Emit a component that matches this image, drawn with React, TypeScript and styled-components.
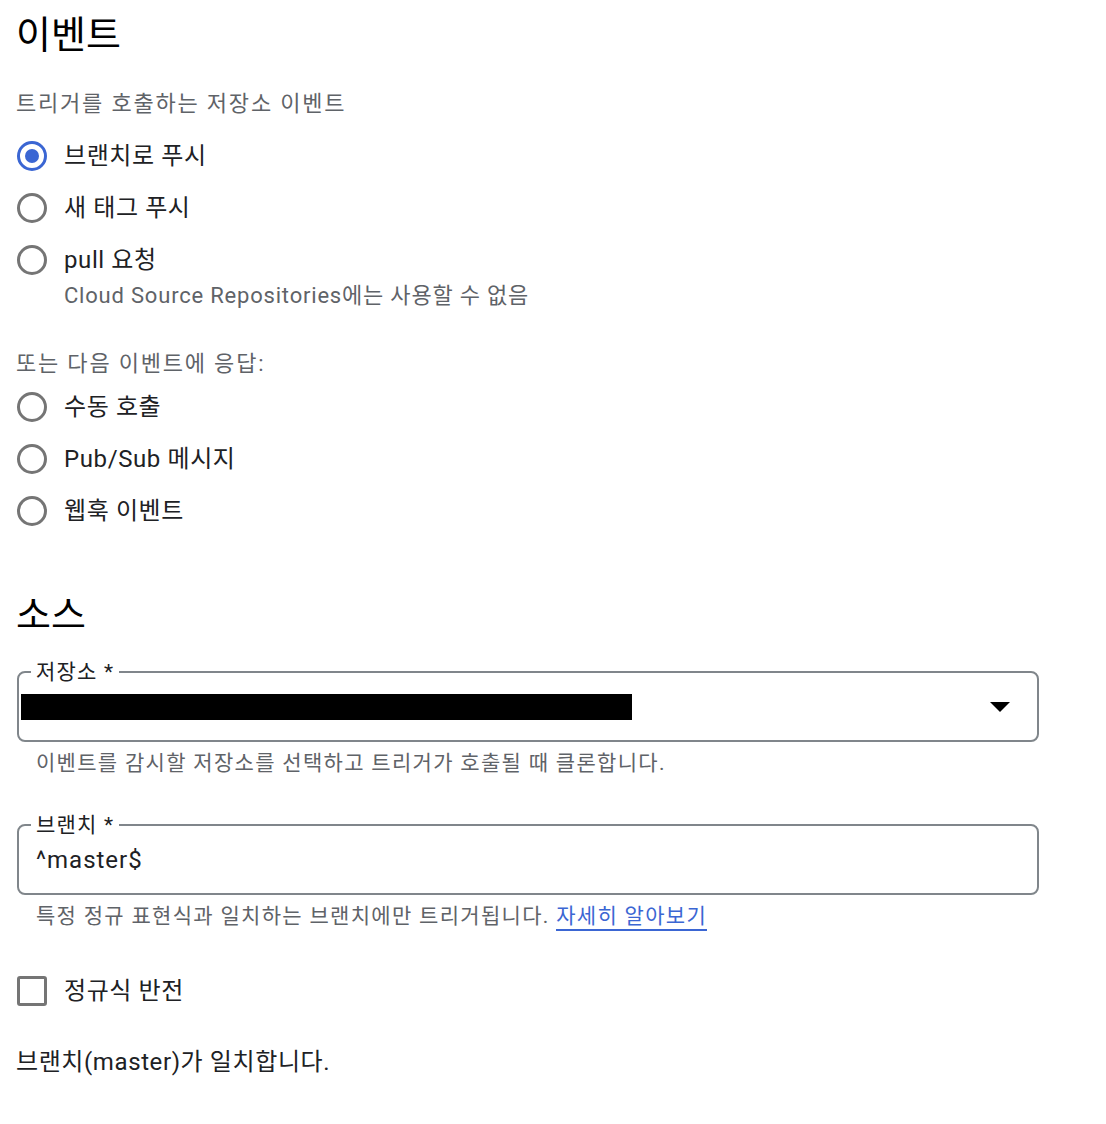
import styled, { createGlobalStyle } from 'styled-components';

const GlobalStyle = createGlobalStyle`
	body {
		margin: 0;
		background: #ffffff;
		font-family: Roboto, 'Noto Sans CJK KR', sans-serif;
		color: #202124;
	}
`;

const BLUE = '#3b66d3';
const GRAY_TEXT = '#5f6368';
const BORDER = '#80868b';

type RadioOption = { label: string; checked?: boolean; hint?: string };

const pushOptions: RadioOption[] = [
	{ label: '브랜치로 푸시', checked: true },
	{ label: '새 태그 푸시' },
	{ label: 'pull 요청', hint: 'Cloud Source Repositories에는 사용할 수 없음' },
];

const otherOptions: RadioOption[] = [{ label: '수동 호출' }, { label: 'Pub/Sub 메시지' }, { label: '웹훅 이벤트' }];

function RadioList({ options, gap }: { options: RadioOption[]; gap: number }) {
	return (
		<RadioGroup $gap={gap}>
			{options.map((opt) => (
				<div key={opt.label}>
					<RadioRow>
						<RadioCircle $checked={!!opt.checked} />
						<OptionLabel>{opt.label}</OptionLabel>
					</RadioRow>
					{opt.hint && <OptionHint>{opt.hint}</OptionHint>}
				</div>
			))}
		</RadioGroup>
	);
}

export default function App() {
	return (
		<>
			<GlobalStyle />
			<Page>
				<SectionTitle>이벤트</SectionTitle>
				<GroupCaption $gap={32}>트리거를 호출하는 저장소 이벤트</GroupCaption>
				<RadioList options={pushOptions} gap={11} />
				<GroupCaption $gap={38}>또는 다음 이벤트에 응답:</GroupCaption>
				<RadioList options={otherOptions} gap={2} />

				<SectionTitle $gap={56}>소스</SectionTitle>

				<Field $gap={23}>
					<FieldLabel>저장소 *</FieldLabel>
					<FieldBody>
						<Redacted />
						<DropArrow viewBox="0 0 20 10">
							<path d="M0 0 L20 0 L10 10 Z" fill="#000" />
						</DropArrow>
					</FieldBody>
				</Field>
				<FieldHint>이벤트를 감시할 저장소를 선택하고 트리거가 호출될 때 클론합니다.</FieldHint>

				<Field $gap={36}>
					<FieldLabel>브랜치 *</FieldLabel>
					<FieldBody>
						<FieldValue>^master$</FieldValue>
					</FieldBody>
				</Field>
				<FieldHint>
					특정 정규 표현식과 일치하는 브랜치에만 트리거됩니다. <HelpLink href="#">자세히 알아보기</HelpLink>
				</FieldHint>

				<CheckRow>
					<CheckBox />
					<OptionLabel>정규식 반전</OptionLabel>
				</CheckRow>

				<MatchText>브랜치(master)가 일치합니다.</MatchText>
			</Page>
		</>
	);
}

const Page = styled.div`
	padding: 13px 0 40px 17px;
	width: 1022px;
`;

const SectionTitle = styled.h2<{ $gap?: number }>`
	margin: ${({ $gap }) => $gap ?? 0}px 0 0 -1px;
	font-size: 38px;
	font-weight: 400;
	line-height: 44px;
	color: #000;
`;

const GroupCaption = styled.div<{ $gap: number }>`
	margin-top: ${({ $gap }) => $gap}px;
	margin-left: -1px;
	font-size: 22px;
	line-height: 30px;
	letter-spacing: 1.8px;
	color: ${GRAY_TEXT};
`;

const RadioGroup = styled.div<{ $gap: number }>`
	display: flex;
	flex-direction: column;
	margin-top: ${({ $gap }) => $gap}px;
`;

const RadioRow = styled.div`
	display: flex;
	align-items: center;
	height: 52px;
`;

const RadioCircle = styled.span<{ $checked: boolean }>`
	box-sizing: border-box;
	flex: none;
	width: 30px;
	height: 30px;
	border-radius: 50%;
	border: 3px solid ${({ $checked }) => ($checked ? BLUE : '#757575')};
	display: flex;
	align-items: center;
	justify-content: center;
	margin-right: 17px;

	&::after {
		content: '';
		display: ${({ $checked }) => ($checked ? 'block' : 'none')};
		width: 14px;
		height: 14px;
		border-radius: 50%;
		background: ${BLUE};
	}
`;

const OptionLabel = styled.span`
	font-size: 24px;
	line-height: 32px;
	letter-spacing: 0.6px;
	color: #202124;
`;

const OptionHint = styled.div`
	margin-top: -5px;
	padding-left: 47px;
	font-size: 22px;
	line-height: 30px;
	letter-spacing: 0.8px;
	color: ${GRAY_TEXT};
`;

const Field = styled.fieldset<{ $gap: number }>`
	margin: ${({ $gap }) => $gap}px 0 0 0;
	padding: 8px 17px 18px 17px;
	border: 2px solid ${BORDER};
	border-radius: 8px;
	min-width: 0;
`;

const FieldLabel = styled.legend`
	margin-left: -5px;
	padding: 0 5px;
	font-size: 21px;
	line-height: 24px;
	letter-spacing: 1.2px;
	color: #202124;
`;

const FieldBody = styled.div`
	display: flex;
	align-items: center;
	justify-content: space-between;
	height: 30px;
`;

const Redacted = styled.div`
	margin-left: -15px;
	width: 611px;
	height: 26px;
	background: #000;
`;

const DropArrow = styled.svg`
	width: 20px;
	height: 10px;
	margin-right: 10px;
`;

const FieldValue = styled.span`
	font-size: 24px;
	line-height: 30px;
	letter-spacing: 1px;
	color: #202124;
`;

const FieldHint = styled.div`
	margin-top: 7px;
	padding-left: 19px;
	font-size: 21px;
	line-height: 28px;
	letter-spacing: 1.3px;
	color: ${GRAY_TEXT};
`;

const HelpLink = styled.a`
	color: ${BLUE};
	text-decoration: none;
	border-bottom: 2px solid ${BLUE};
	padding-bottom: 1px;
`;

const CheckRow = styled.div`
	display: flex;
	align-items: center;
	height: 40px;
	margin-top: 41px;
`;

const CheckBox = styled.span`
	box-sizing: border-box;
	flex: none;
	width: 30px;
	height: 30px;
	border: 3px solid #757575;
	border-radius: 3px;
	margin-right: 17px;
`;

const MatchText = styled.div`
	margin-top: 35px;
	margin-left: -1px;
	font-size: 24px;
	line-height: 32px;
	letter-spacing: 0.6px;
	color: #202124;
`;
